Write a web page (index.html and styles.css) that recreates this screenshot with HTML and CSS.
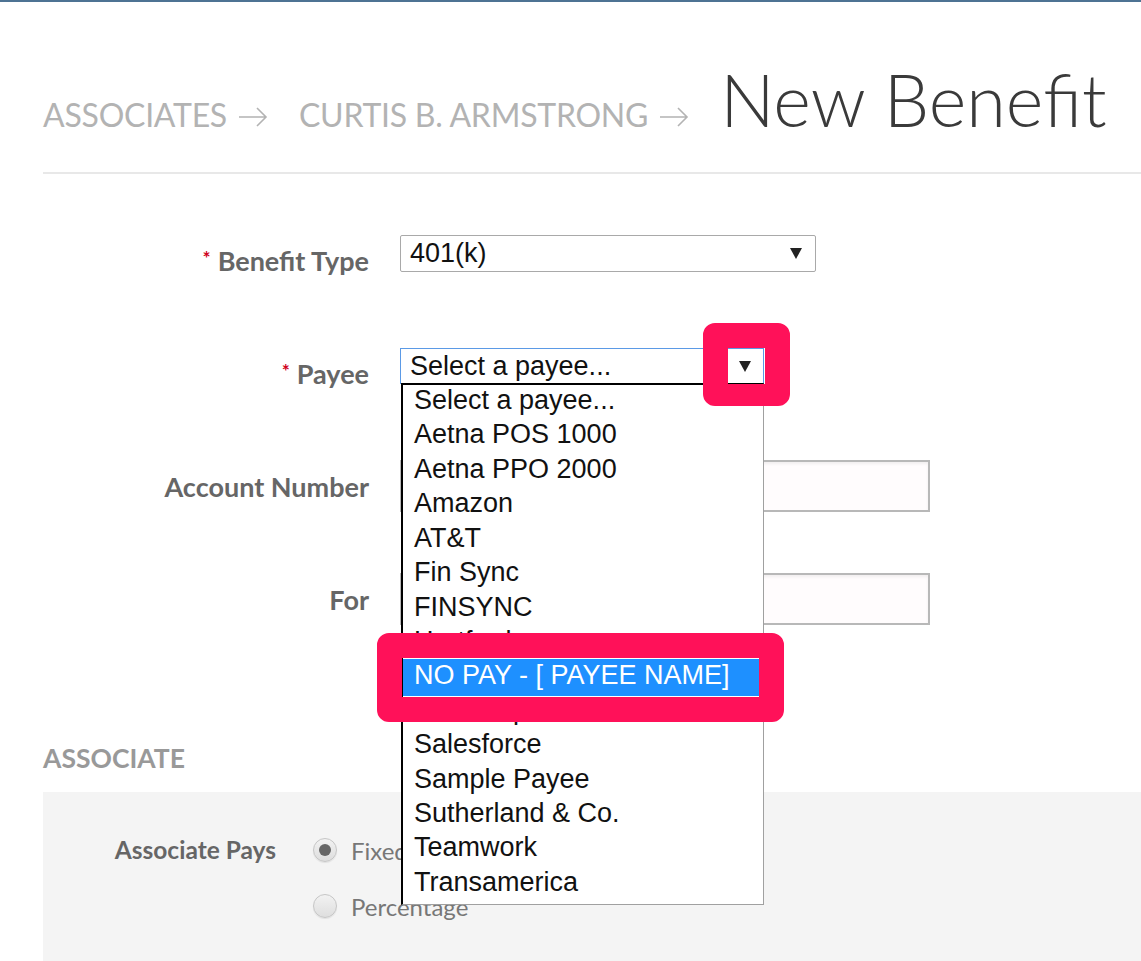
FILE: index.html
```html
<!DOCTYPE html>
<html lang="en">
<head>
    <meta charset="UTF-8">
    <meta name="viewport" content="width=device-width, initial-scale=1.0">
    <title>New Benefit</title>
    <link rel="stylesheet" href="styles.css">
</head>
<body>
    <div class="page">
        <header class="page-header">
            <a class="crumb" href="#">ASSOCIATES</a>
            <svg class="crumb-arrow" viewBox="0 0 30 20"><path d="M1 10H28M19 1L28 10L19 19" fill="none" stroke="#b3b3b3" stroke-width="1.6"/></svg>
            <a class="crumb" href="#">CURTIS B. ARMSTRONG</a>
            <svg class="crumb-arrow" viewBox="0 0 30 20"><path d="M1 10H28M19 1L28 10L19 19" fill="none" stroke="#b3b3b3" stroke-width="1.6"/></svg>
            <h1 class="page-title">New Benefit</h1>
        </header>
        <div class="divider"></div>

        <form class="benefit-form">
            <div class="form-row">
                <label class="form-label"><span class="req">*</span>Benefit Type</label>
                <div class="control">
                    <div class="select select-type">
                        <span>401(k)</span>
                        <svg class="caret" viewBox="0 0 12 11"><path d="M0 0H12L6 11Z" fill="#222"/></svg>
                    </div>
                </div>
            </div>

            <div class="form-row">
                <label class="form-label"><span class="req">*</span>Payee</label>
                <div class="control">
                    <div class="select select-payee">
                        <span>Select a payee...</span>
                        <span class="caret-box"><svg class="caret" viewBox="0 0 12 11"><path d="M0 0H12L6 11Z" fill="#222"/></svg></span>
                    </div>
                    <ul class="options">
                        <li>Select a payee...</li>
                        <li>Aetna POS 1000</li>
                        <li>Aetna PPO 2000</li>
                        <li>Amazon</li>
                        <li>AT&amp;T</li>
                        <li>Fin Sync</li>
                        <li>FINSYNC</li>
                        <li>Hartford</li>
                        <li class="selected">NO PAY - [ PAYEE NAME]</li>
                        <li>Roth Capital</li>
                        <li>Salesforce</li>
                        <li>Sample Payee</li>
                        <li>Sutherland &amp; Co.</li>
                        <li>Teamwork</li>
                        <li>Transamerica</li>
                    </ul>
                    <div class="mark mark-caret"></div>
                    <div class="mark mark-option"></div>
                </div>
            </div>

            <div class="form-row">
                <label class="form-label">Account Number</label>
                <div class="control"><input class="text-input" type="text"></div>
            </div>

            <div class="form-row">
                <label class="form-label">For</label>
                <div class="control"><input class="text-input" type="text"></div>
            </div>
        </form>

        <h3 class="section-title">ASSOCIATE</h3>
        <div class="panel">
            <div class="panel-label">Associate Pays</div>
            <div class="radio-group">
                <div class="radio"><span class="radio-dot on"></span>Fixed</div>
                <div class="radio"><span class="radio-dot"></span>Percentage</div>
            </div>
        </div>
    </div>
</body>
</html>
```

FILE: styles.css
```css
* {
    box-sizing: border-box;
}
body {
    margin: 0;
    background: #fff;
    border-top: 2px solid #4e7393;
    font-family: Lato, "Open Sans", sans-serif;
}
.page {
    padding-left: 43px;
    overflow: hidden;
}
.page-header {
    display: flex;
    align-items: baseline;
    margin-top: 55px;
    white-space: nowrap;
}
.crumb {
    font-size: 32px;
    line-height: 1;
    letter-spacing: -0.25px;
    color: #b3b3b3;
    text-decoration: none;
}
.crumb-arrow {
    width: 30px;
    height: 20px;
    margin: 0 31px 6px 11px;
}
.page-title {
    margin: 0;
    font-size: 72px;
    line-height: 84px;
    font-weight: 300;
    color: #3a3a3a;
}
.divider {
    height: 2px;
    background: #e8e8e8;
    margin-top: 31px;
}
.benefit-form {
    margin-top: 60px;
}
.form-row {
    display: grid;
    grid-template-columns: 326px 1fr;
    column-gap: 31px;
    height: 52px;
    align-items: center;
    margin-bottom: 61px;
}
.form-label {
    text-align: right;
    font-size: 27px;
    font-weight: 700;
    color: #666;
}
.req {
    color: #d0021b;
    font-size: 19px;
    vertical-align: 6px;
    margin-right: 7px;
}
.control {
    position: relative;
    align-self: start;
}
.select {
    display: flex;
    align-items: center;
    justify-content: space-between;
    height: 37px;
    margin-top: 1px;
    padding: 0 13px 0 9px;
    border: 1px solid #a9a9a9;
    border-radius: 2px;
    background: #fff;
    font-family: "Liberation Sans", Arial, sans-serif;
    font-size: 27px;
    color: #111;
}
.select-type {
    width: 416px;
}
.select-payee {
    width: 364px;
    height: 36px;
    padding-right: 1px;
    border-color: #5b9ae6;
    border-radius: 0;
}
.caret {
    width: 12px;
    height: 11px;
}
.caret-box {
    display: flex;
    align-items: center;
    justify-content: center;
    width: 34px;
    height: 33px;
    background: #fff;
}
.options {
    position: absolute;
    left: 1px;
    top: 36px;
    width: 363px;
    margin: 0;
    padding: 0 0 3px;
    list-style: none;
    background: #fff;
    border-top: 2px solid #000;
    border-left: 2px solid #000;
    border-right: 1px solid #a0a0a0;
    border-bottom: 1px solid #a0a0a0;
    font-family: "Liberation Sans", Arial, sans-serif;
    font-size: 27px;
    color: #111;
    z-index: 2;
}
.options li {
    height: 34.43px;
    line-height: 31.4px;
    padding: 0 0 3px 11px;
    white-space: nowrap;
}
.options li.selected {
    background: #1e90ff;
    color: #fff;
    box-shadow: 0 -1px 0 #1e90ff, 0 1px 0 #1e90ff;
}
.mark {
    position: absolute;
    border: 25px solid #ff1159;
    border-radius: 12px;
    z-index: 3;
}
.mark-caret {
    left: 303px;
    top: -24px;
    width: 87px;
    height: 83px;
    border-bottom-width: 22px;
}
.mark-option {
    left: -23px;
    top: 286px;
    width: 407px;
    height: 89px;
}
.text-input {
    display: block;
    width: 530px;
    height: 52px;
    border: 2px solid #b8b8b8;
    background: #fffcfd;
    box-shadow: inset 0 2px 3px rgba(0, 0, 0, 0.06);
}
.section-title {
    margin: 118px 0 0;
    font-size: 26.5px;
    line-height: 30px;
    font-weight: 700;
    color: #999;
}
.panel {
    display: grid;
    grid-template-columns: 233px auto;
    column-gap: 37px;
    align-items: start;
    margin-top: 19px;
    padding: 43px 0 70px;
    background: #f4f4f4;
}
.panel-label {
    text-align: right;
    font-size: 24.5px;
    line-height: 30px;
    font-weight: 700;
    color: #666;
}
.radio-group {
    display: flex;
    flex-direction: column;
    gap: 26px;
}
.radio {
    display: flex;
    align-items: center;
    gap: 14px;
    height: 30px;
    font-size: 24px;
    color: #777;
}
.radio-dot {
    display: flex;
    align-items: center;
    justify-content: center;
    width: 24px;
    height: 24px;
    border-radius: 50%;
    border: 1px solid #c6c6c6;
    background: linear-gradient(#f2f2f2, #dedede);
    box-shadow: 0 1px 1px rgba(0, 0, 0, 0.08);
}
.radio-dot.on::after {
    content: "";
    width: 12px;
    height: 12px;
    border-radius: 50%;
    background: #666;
}
```
